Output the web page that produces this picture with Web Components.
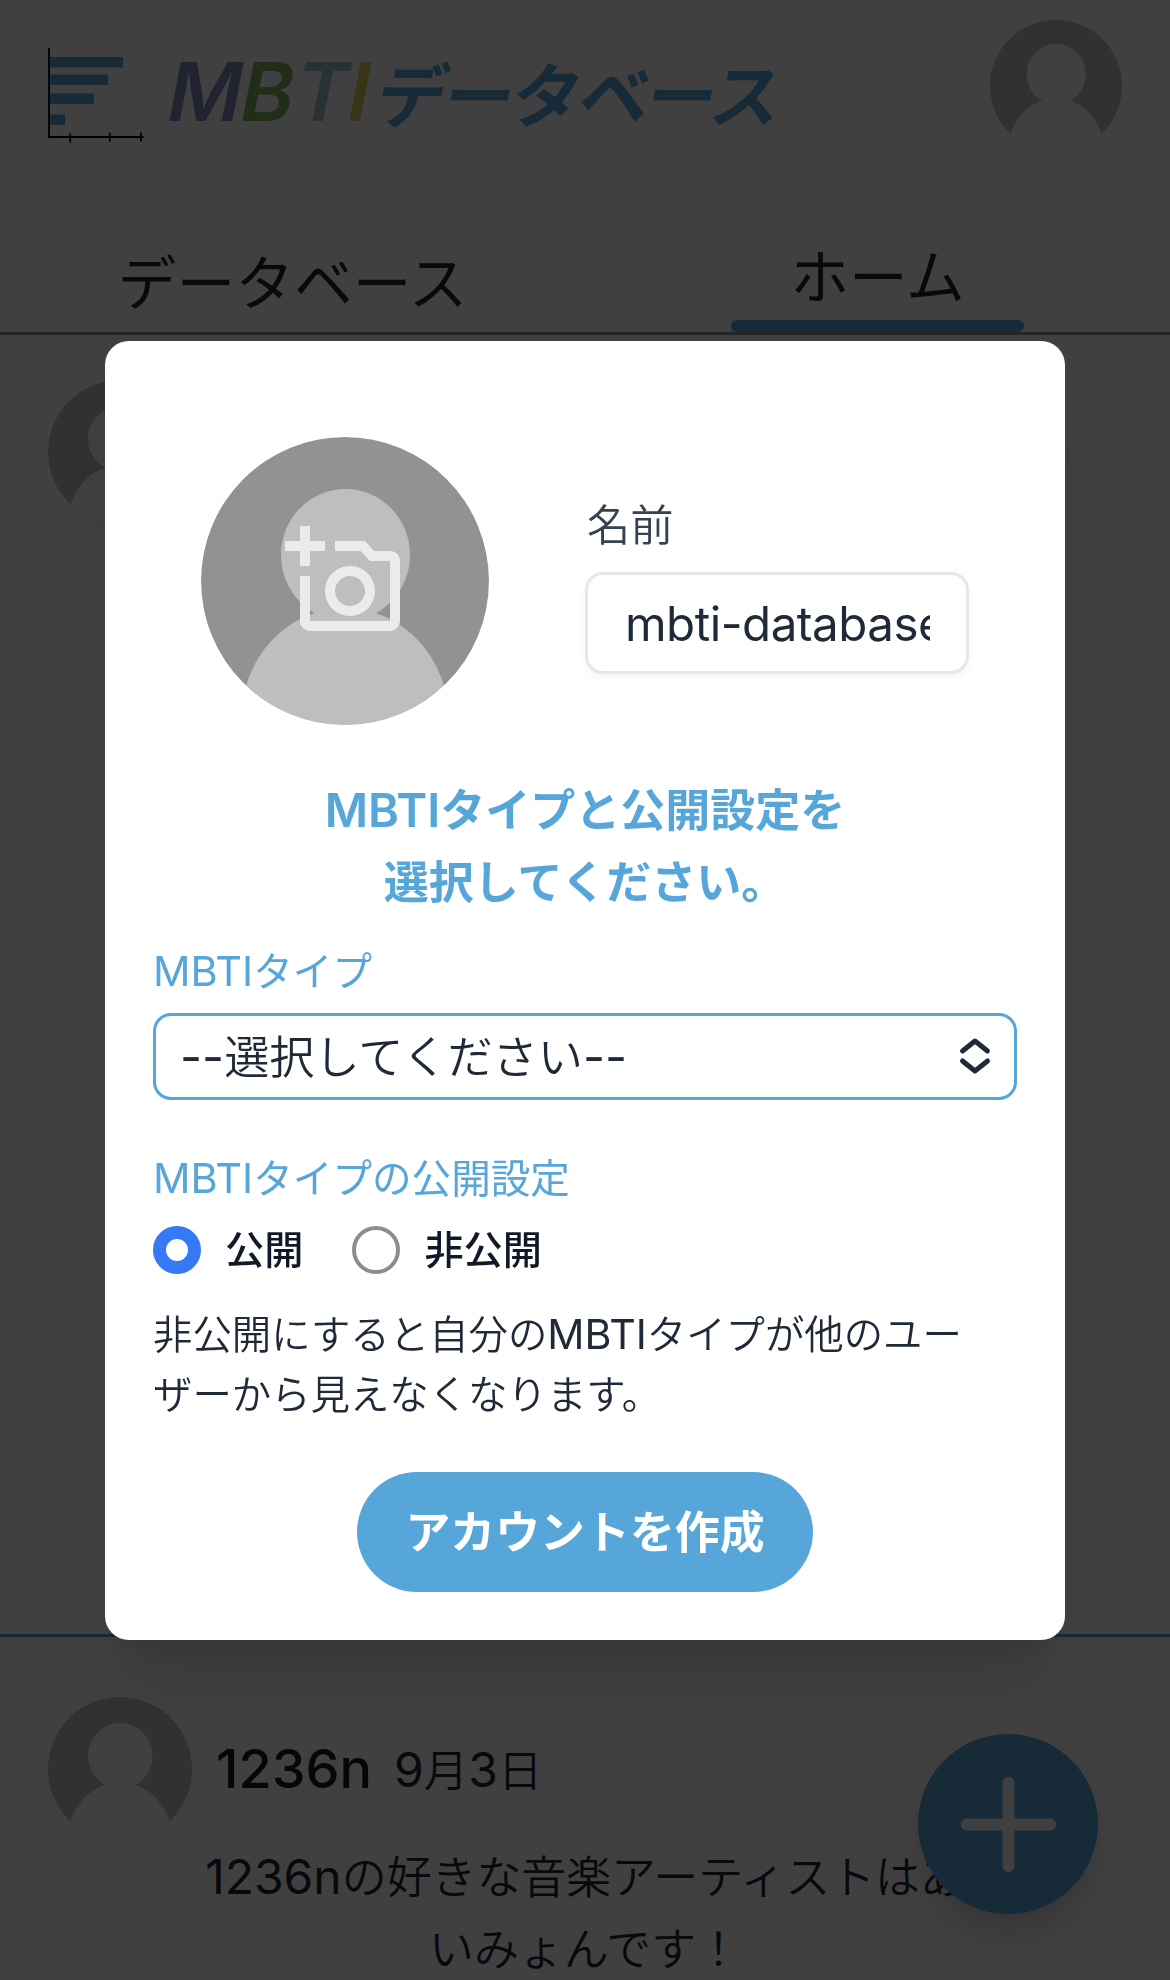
<!DOCTYPE html>
<html lang="ja">
<head>
<meta charset="utf-8">
<title>MBTIデータベース</title>
<style>
html,body{margin:0;height:100%;overflow:hidden}
body{background:#fff;color:#1f2937;font-family:Inter,"Noto Sans CJK JP",sans-serif;--blue:#57a6da}
</style>
</head>
<body>
<app-page></app-page>
<app-overlay><account-dialog></account-dialog></app-overlay>
<script>
const define=(name,html)=>{
  const t=document.createElement('template');t.innerHTML=html;
  customElements.define(name,class extends HTMLElement{
    constructor(){super();this.attachShadow({mode:'open'}).append(t.content.cloneNode(true));}
  });
};

define('user-avatar',`<style>
:host{display:block;width:144px;height:144px;border-radius:50%;overflow:hidden;flex:none}
svg{display:block;width:100%;height:100%}
</style>
<svg viewBox="0 0 288 288"><rect width="288" height="288" fill="#c3c3c3"/><g fill="#fefefe"><ellipse cx="144.500" cy="118" rx="64.500" ry="66"/><ellipse cx="144" cy="283" rx="104" ry="112"/></g></svg>`);

define('site-logo',`<style>
:host{display:block}
svg{display:block;overflow:visible}
text{font-family:Inter,sans-serif;font-weight:600;font-size:81px}
.jp{font-family:"Noto Sans CJK JP",sans-serif;font-size:70px;font-weight:600}
</style>
<svg width="740" height="100" viewBox="48 45 740 100">
<g fill="var(--blue)"><rect x="49" y="57" width="74" height="10.5"/><rect x="49" y="74.5" width="59" height="10.5"/><rect x="49" y="93.5" width="45" height="10.5"/><rect x="49" y="114.5" width="16" height="10.5"/></g>
<path d="M49 48V137H143.500M70.200 133.500V142.500M109.800 132.500V141.500M141 132.500V141.500" fill="none" stroke="#000" stroke-width="1.800"/>
<text transform="translate(163.500 121) skewX(-11)" fill="#868ac0">M</text>
<text transform="translate(236.500 121) skewX(-11)" fill="#84b457">B</text>
<text transform="translate(291 121) skewX(-11)" fill="#a0c4cf">T</text>
<text transform="translate(343.500 121) skewX(-11)" fill="#e7cf57">I</text>
<text class="jp" transform="translate(373 122) skewX(-10)" fill="var(--blue)" textLength="404">データベース</text>
</svg>`);

define('site-header',`<style>
:host{display:flex;flex:none;justify-content:space-between;align-items:flex-start;height:225px;padding:20px 48px 0;box-sizing:border-box}
site-logo{margin-top:25px}
user-avatar{width:132px;height:132px}
</style><site-logo></site-logo><user-avatar></user-avatar>`);

define('tab-item',`<style>
:host{display:flex;flex:1;flex-direction:column;align-items:center;justify-content:flex-end;font-size:58.800px;line-height:84px;height:107px}
div{padding-bottom:6.500px}
i{display:none;width:50%;height:12px;border-radius:6px;background:var(--blue)}
:host([active]) i{display:block}
:host([active]) div{padding-bottom:.5px}
</style><div><slot></slot></div><i></i>`);

define('tab-bar',`<style>:host{display:flex;flex:none;border-bottom:3px solid #949699}</style>
<tab-item>データベース</tab-item><tab-item active>ホーム</tab-item>`);

define('post-item',`<style>
:host{display:block;flex:none;padding:60px 48px 0}
header{display:flex;align-items:center;gap:24px;color:#1f2937}
b{font-size:54px;font-weight:500;color:#111827;padding-bottom:2px}
time{font-size:44.500px;font-weight:350;margin-left:-2px;padding-bottom:3px}
p{margin:2px 0 0;padding:0 140px;text-align:center;font-size:44.900px;line-height:71.500px;font-weight:350}
</style>
<header><user-avatar></user-avatar><b><slot name="name"></slot></b><time><slot name="date"></slot></time></header><p><slot></slot></p>`);

define('fab-button',`<style>
:host{position:absolute;right:72px;bottom:66px;width:180px;height:180px;border-radius:50%;background:var(--blue);display:grid;place-items:center;box-shadow:0 30px 45px -9px rgba(0,0,0,.15),0 12px 18px -6px rgba(0,0,0,.08)}
</style><svg width="95" height="95" viewBox="0 0 95 95"><path d="M47.500 6V89M6 47.500H89" stroke="#fff" stroke-width="12" stroke-linecap="round"/></svg>`);

define('app-page',`<style>
:host{display:flex;flex-direction:column;height:1980px;position:relative;overflow:hidden}
.first{box-sizing:border-box;height:1302px;border-bottom:3px solid var(--blue);padding:45px 48px 0;flex:none}
.l,.n{font-size:48px;font-weight:400;line-height:0}
</style>
<site-header></site-header><tab-bar></tab-bar>
<div class="first"><user-avatar></user-avatar></div>
<post-item><span slot="name">1236n</span><span slot="date"><span class="n">9</span>月<span class="n">3</span>日</span><span class="l">1236n</span>の好きな音楽アーティストはあ<br>いみょんです！</post-item>
<fab-button></fab-button>`);

define('app-overlay',`<style>
:host{position:fixed;inset:0;display:grid;place-items:center;background:rgba(0,0,0,.75)}
</style><slot></slot>`);

define('photo-picker',`<style>
:host{display:grid;width:288px;height:288px;border-radius:50%;overflow:hidden;place-items:center;flex:none}
user-avatar,.shade,svg{grid-area:1/1}
user-avatar,.shade{width:288px;height:288px}
.shade{background:rgba(0,0,0,.25)}
svg{z-index:1}
</style>
<user-avatar></user-avatar><div class="shade"></div>
<svg width="120" height="120" viewBox="0 0 24 24" fill="#ebebeb"><path d="M21 6h-3.170L16 4h-6v2h5.120l1.830 2H21v12H5v-9H3v9c0 1.100.9 2 2 2h16c1.100 0 2-.9 2-2V8c0-1.100-.9-2-2-2zM8 14c0 2.760 2.240 5 5 5s5-2.240 5-5-2.240-5-5-5-5 2.240-5 5zm5-3c1.650 0 3 1.350 3 3s-1.350 3-3 3-3-1.350-3-3 1.350-3 3-3zM5 6h3V4H5V1H3v3H0v2h3v3h2z"/></svg>`);

define('name-field',`<style>
:host{display:flex;flex-direction:column;flex:1;min-width:0}
label{font-size:43.300px;line-height:60px;margin-bottom:17px;padding-left:2px;color:#374151;font-weight:350}
.box{box-sizing:border-box;height:102px;border:3px solid #e5e7eb;border-radius:18px;padding:0 36px 0 37px;box-shadow:0 3px 6px rgba(0,0,0,.05)}
.v{overflow:hidden;white-space:nowrap;font-size:47.500px;line-height:98px;letter-spacing:-.5px}
</style><label>名前</label><div class="box"><div class="v">mbti-database</div></div>`);

define('type-select',`<style>
:host{display:flex;flex:none;align-items:center;justify-content:space-between;box-sizing:border-box;height:87px;border:3px solid var(--blue);border-radius:18px;padding:0 21px 0 24px;font-size:45.200px;font-weight:350;line-height:79px}
div{padding-top:2px}
.h{font-size:48px;font-weight:400;line-height:0}
</style><div><span class="h">--</span>選択してください<span class="h">--</span></div>
<svg width="36" height="40" viewBox="0 0 36 40" fill="none" stroke="#1f2937" stroke-width="5" stroke-linecap="round" stroke-linejoin="round"><path d="M5.500 15L18 5L30.500 15M5.500 25L18 35L30.500 25"/></svg>`);

define('radio-option',`<style>
:host{display:flex;align-items:center;gap:24px;font-size:39.200px;font-weight:500;line-height:48px;color:#111827}
i{box-sizing:border-box;width:48px;height:48px;border-radius:50%;border:4px solid #8c8c8c}
:host([checked]) i{border:13.500px solid #3579f6}
</style><i></i><span><slot></slot></span>`);

define('pill-button',`<style>
:host{display:flex;flex:none;align-items:center;justify-content:center;width:456px;height:120px;border-radius:60px;background:var(--blue);color:#fff;font-size:44.900px;font-weight:600;line-height:60px;align-self:center}
span{padding-top:2px}
</style><span><slot></slot></span>`);

define('account-dialog',`<style>
:host{display:flex;flex-direction:column;box-sizing:border-box;width:960px;height:1299px;background:#fff;border-radius:24px;padding:96px 48px 48px;box-shadow:0 60px 75px -15px rgba(0,0,0,.12),0 24px 30px -18px rgba(0,0,0,.12)}
.top{display:flex;gap:96px;padding:0 48px;height:288px}
name-field{padding-top:58px}
.l{line-height:0}
h2{margin:50px 0 0;font-size:45px;line-height:72px;text-align:center;color:var(--blue);font-weight:600}
h2 .l{font-size:47px;font-weight:600}
h3{margin:0;color:var(--blue);font-size:39.600px;line-height:60px;font-weight:400}
h3 .l{font-size:41.500px}
.a{margin:23px 0 11px}
.b{margin:49px 0 17px}
.radios{display:flex;gap:49px}
p{margin:31px 0 47px;font-size:39.400px;line-height:60px;font-weight:350}
p .l{font-size:41.200px;font-weight:400}
</style>
<div class="top"><photo-picker></photo-picker><name-field></name-field></div>
<h2><span class="l">MBTI</span>タイプと公開設定を<br>選択してください。</h2>
<h3 class="a"><span class="l">MBTI</span>タイプ</h3>
<type-select></type-select>
<h3 class="b"><span class="l">MBTI</span>タイプの公開設定</h3>
<div class="radios"><radio-option checked>公開</radio-option><radio-option>非公開</radio-option></div>
<p>非公開にすると自分の<span class="l">MBTI</span>タイプが他のユー<br>ザーから見えなくなります。</p>
<pill-button>アカウントを作成</pill-button>`);
</script>
</body>
</html>
